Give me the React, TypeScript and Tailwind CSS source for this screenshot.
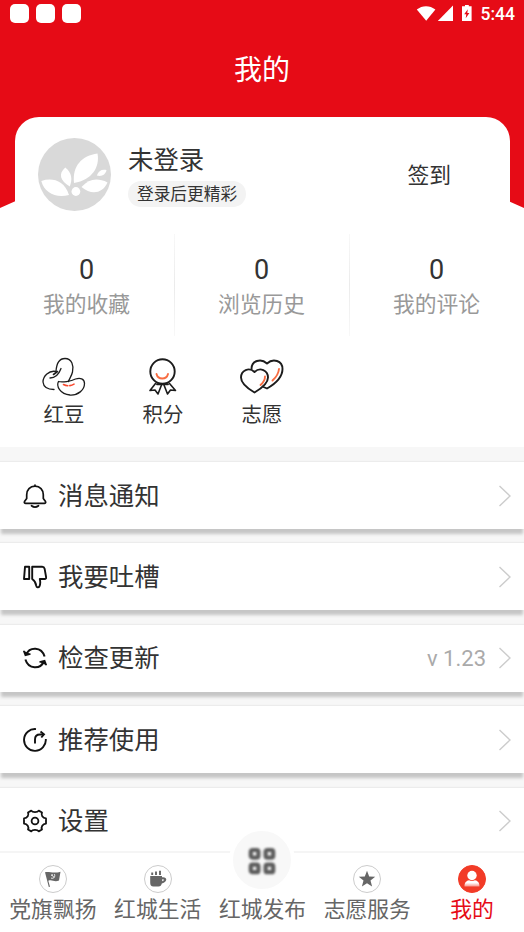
import React, { useState } from "react";

const PROFILE_STATS = [
  { id: "favorites", label: "我的收藏", count: 0 },
  { id: "history", label: "浏览历史", count: 0 },
  { id: "comments", label: "我的评论", count: 0 },
];

const SHORTCUTS = [
  { id: "bean", label: "红豆", icon: BeanIcon },
  { id: "points", label: "积分", icon: MedalIcon },
  { id: "volunteer", label: "志愿", icon: HeartsIcon },
];

const MENU_ITEMS = [
  { id: "notice", label: "消息通知", icon: BellIcon },
  { id: "feedback", label: "我要吐槽", icon: ThumbDownIcon },
  { id: "update", label: "检查更新", icon: RefreshIcon, value: "v 1.23" },
  { id: "share", label: "推荐使用", icon: ShareIcon },
  { id: "settings", label: "设置", icon: GearIcon },
];

const TABS = [
  { id: "party", label: "党旗飘扬", icon: FlagIcon },
  { id: "life", label: "红城生活", icon: CupIcon },
  { id: "publish", label: "红城发布", icon: GridIcon },
  { id: "service", label: "志愿服务", icon: StarIcon },
  { id: "mine", label: "我的", icon: UserIcon },
];

/* 状态栏 */
function StatusBar() {
  return (
    <div className="flex h-[27px] items-center justify-between pl-[10px] pr-[9px]">
      <div className="flex gap-[7px]">
        {[0, 1, 2].map((i) => (
          <span key={i} className="h-[19px] w-[19px] rounded-[5px] bg-white" />
        ))}
      </div>
      <div className="flex items-center">
        <svg width="56" height="18" viewBox="0 0 56 18" fill="#fff">
          <path d="M0.800 4.500C6.200 0 13.800 0 19.400 4.500L10.200 15.800Z" />
          <path d="M37 .6V16.100H21.800Z" />
          <path d="M49 0h3.800v1.200h2.800V16.100h-9.600V1.200h3Z" />
          <path d="M51.800 4.200l-3.600 5h2.100l-.6 4 3.700-5.200h-2.100Z" fill="#e60b16" />
        </svg>
        <span className="ml-[9px] pt-[2px] font-[Roboto] text-[17.500px] font-medium leading-none text-white">5:44</span>
      </div>
    </div>
  );
}

function ProfileHeader() {
  return (
    <header className="relative">
      <div className="absolute inset-x-0 top-0 h-[232px] bg-[#e60b16] [clip-path:polygon(0_0,100%_0,100%_208px,97%_201px,3%_201px,0_208px)]" />
      <div className="relative">
        <StatusBar />
        <h1 className="flex h-[89.500px] items-center justify-center pb-[2px] text-[28px] text-white">我的</h1>
        <div className="mx-[14.500px] flex h-[115px] items-start rounded-t-[24px] bg-white pl-[23px] pr-[58.500px] pt-[21.500px]">
          <AvatarPlaceholder />
          <div className="ml-[17.500px] flex-1">
            <p className="h-[42.500px] text-[25.400px] leading-[44px] text-[#333]">未登录</p>
            <p className="inline-flex h-[26px] items-center rounded-full bg-[#f3f3f3] px-[9px] pt-[3px] text-[16.700px] leading-none text-[#333]">
              登录后更精彩
            </p>
          </div>
          <button type="button" className="h-[73px] pt-[3px] text-[21.800px] text-[#333]">
            签到
          </button>
        </div>
      </div>
    </header>
  );
}

function AvatarPlaceholder() {
  return (
    <svg className="h-[73px] w-[73px] shrink-0" viewBox="0 0 73 73">
      <circle cx="36.5" cy="36.5" r="36.5" fill="#d9d9d9" />
      <g fill="#fff">
        <path d="M36 45C34 28 44 17.500 59.500 15.500C62 29 54 42 36 45Z" />
        <path d="M31.800 48.500C22 42.500 20 36 27.300 29.500C34 35 34.500 41 31.800 48.500Z" />
        <path d="M3.300 43C14 39.500 26 42 31 57C18 60.500 6.500 55 3.300 43Z" />
        <path d="M43.500 49C51 41 59 39.500 69.500 44.500C64.500 55.500 53.500 57.500 43.500 49Z" />
        <path d="M58.800 37.500C60.500 32.500 64 31 68.500 32C67.500 37 63.500 38.800 58.800 37.500Z" />
        <circle cx="37.900" cy="53.500" r="4.400" />
      </g>
    </svg>
  );
}

function BeanIcon() {
  return (
    <svg width="44" height="40" viewBox="0 0 44 40" fill="none" stroke="#1c1c1c" strokeWidth="1.300" strokeLinecap="round">
      <path d="M14 14.500C14.500 6 18 1.500 23 1.500C30 1.500 32 9 30.500 15C29.500 19.500 27 22 26.500 24.500" />
      <path d="M16.500 24.500C14 29 18 37 28 38C36 38.500 42.500 33 42.500 26.500C42.500 21.500 38 20.500 33.500 22C29 24.500 20 25.500 16.500 24.500Z" />
      <path d="M14 14.500C7 13 1 19 1 25C1.500 30 6 32.500 12 32.500" />
      <path d="M8 21C13 21 17 17 19 11.500" />
      <path d="M11.500 17.500L15.500 14.500" strokeWidth="1.600" />
      <path d="M21.500 27.500C25.500 29.500 30 29 33.500 26" stroke="#f8492f" strokeWidth="1.600" strokeDasharray="4.500 2" />
    </svg>
  );
}

function MedalIcon() {
  return (
    <svg width="44" height="40" viewBox="0 0 44 40" fill="none" stroke="#1c1c1c" strokeWidth="1.900" strokeLinejoin="round" strokeLinecap="round">
      <circle cx="21.500" cy="14.500" r="12.200" />
      <path d="M14.500 26.500L9 33.500L14 33L17 37L20.500 28M28.500 26.500L34.500 33.500L29.500 33L26.500 37L23 28" strokeWidth="1.600" />
      <path d="M16 27.200H27" />
      <path d="M15.500 17C17 23 25.500 23 27 17" stroke="#f86d42" strokeWidth="1.900" />
    </svg>
  );
}

function HeartsIcon() {
  return (
    <svg width="44" height="40" viewBox="0 0 44 40" fill="none" stroke="#1c1c1c" strokeWidth="1.900" strokeLinejoin="round" strokeLinecap="round">
      <path d="M11.500 12C11.500 3.500 21 1 27 6.500C33 1 42.500 3.500 42.500 12C42.500 21.500 34 27.500 27 31.500L23.500 30" />
      <path d="M14.500 15C20 9.500 28 13.500 28 20.500C28 27 20.500 32 14.500 35.500C8.500 32 1 27 1 20.500C1 13.500 9 9.500 14.500 15Z" fill="#fff" />
      <path d="M25 19.500C25 23 23.500 25.500 20.500 28M39 12C38.500 16.500 36.500 20 32.500 23.500" stroke="#f86d42" strokeWidth="1.900" />
    </svg>
  );
}

function BellIcon() {
  return (
    <svg width="24" height="24" viewBox="0 0 24 24" fill="none" stroke="#111" strokeWidth="1.700" strokeLinejoin="round" strokeLinecap="round">
      <path d="M12 1V2.200M12 2.200C7 2.200 3.700 6 3.700 10.800V14.500L1.500 17.500C1 18.600 1.500 19.300 2.700 19.300H21.300C22.500 19.300 23 18.600 22.500 17.500L20.300 14.500V10.800C20.300 6 17 2.200 12 2.200Z" />
      <path d="M8.500 21.700C10.500 23.200 13.500 23.200 15.500 21.700" />
    </svg>
  );
}

function ThumbDownIcon() {
  return (
    <svg width="24" height="24" viewBox="0 0 24 24" fill="none" stroke="#111" strokeWidth="1.900" strokeLinejoin="round">
      <path d="M2 1.800H6.200V14H1Z" />
      <path d="M9.200 1.800H19.200C20.600 1.800 21.300 2.500 21.600 3.700L23.100 12C23.300 13.200 22.800 14 21.600 14H16.800C17.500 17 17.300 19.500 16.500 21.200C15.500 23 13.500 22.600 13.200 20.700C12.900 17.500 11 15.200 9.200 14Z" />
    </svg>
  );
}

function RefreshIcon() {
  return (
    <svg width="24" height="24" viewBox="0 0 24 24" fill="none" stroke="#111" strokeWidth="2">
      <path d="M3.200 8.500C6.500.500 18.500.300 21.600 10.500M20.800 15.500C17.500 23.500 5.500 23.700 2.400 13.500" />
      <path d="M.700 4.800L2.400 9.200L7.500 8M23.300 19.200L21.600 14.800L16.500 16" fill="#111" strokeWidth="1.600" />
    </svg>
  );
}

function ShareIcon() {
  return (
    <svg width="24" height="24" viewBox="0 0 24 24" fill="none" stroke="#111" strokeWidth="1.900">
      <path d="M13 1.100A10.900 10.900 0 1 0 22.800 11" />
      <path d="M12 15.500V11.500C12 8.500 14 6.500 17 6.500H20" />
      <path d="M17.500 3.500L21 6.300L18.300 9.500" />
    </svg>
  );
}

function GearIcon() {
  return (
    <svg width="24" height="24" viewBox="0 0 24 24" fill="none" stroke="#111" strokeWidth="1.800" strokeLinejoin="round">
      <path d="M8.300 1.600C9.500 3.700 14.500 3.700 15.700 1.600L19 3.500C17.800 6 19.500 9.200 23 9.400V14.600C19.500 14.800 17.800 18 19 20.500L15.700 22.400C14.500 20.300 9.500 20.300 8.300 22.400L5 20.500C6.200 18 4.500 14.800 1 14.600V9.400C4.500 9.200 6.200 6 5 3.500Z" />
      <circle cx="12" cy="12" r="3.400" />
    </svg>
  );
}

function FlagIcon() {
  return (
    <svg width="18" height="18" viewBox="0 0 18 18">
      <path d="M1 2.300C5 .800 8 4 16.500 1.800L15 10.500C10 12.500 8 9 4.300 10.800L6 16.800L4.800 17Z" fill="#666" />
      <path d="M7.500 4.500L10 7.500M7 8C9 9 11.500 7.500 10.500 4.200M7.300 5.800L8.800 4.300" stroke="#fff" strokeWidth=".9" fill="none" />
    </svg>
  );
}

function CupIcon() {
  return (
    <svg width="18" height="18" viewBox="0 0 18 18" fill="#666">
      <path d="M1.200 6H13V7.300C18.500 6.500 19 12 12.800 13.500C12.300 15.500 11.500 16.500 9.500 16.500H4.500C2 16.500 1.200 15 1.200 12.500ZM13.200 9.200V11.300C15.500 10.500 15.500 8.800 13.200 9.200Z" fillRule="evenodd" />
      <path d="M3.200 5V2.500M7 5V1.500M11 5V.800" stroke="#666" strokeWidth="1.900" />
    </svg>
  );
}

function StarIcon() {
  return (
    <svg width="18" height="18" viewBox="0 0 18 18" fill="#666">
      <path d="M9 .800L11.200 6.500L17.200 6.800L12.500 10.600L14.100 16.500L9 13.200L3.900 16.500L5.500 10.600L.800 6.800L6.800 6.500Z" />
    </svg>
  );
}

function UserIcon() {
  return (
    <svg width="18" height="18" viewBox="0 0 18 18">
      <defs>
        <linearGradient id="userBody" x1="0" y1="0" x2="0" y2="1">
          <stop offset=".4" stopColor="#fff" />
          <stop offset="1" stopColor="#fff" stopOpacity=".45" />
        </linearGradient>
      </defs>
      <circle cx="9" cy="5.500" r="4.700" fill="#fff" />
      <path d="M1.500 16.500C1.500 12.500 3.500 10.800 6 10.300C8 11.300 10 11.300 12 10.300C14.500 10.800 16.500 12.500 16.500 16.500Z" fill="url(#userBody)" />
    </svg>
  );
}

function GridIcon() {
  return (
    <svg className="blur-[0.8px]" width="28" height="28" viewBox="0 0 28 28" fill="none" stroke="#5c5c5c" strokeWidth="4.200">
      <rect x="2.800" y="3" width="7.600" height="7.600" rx="1.800" />
      <rect x="17.600" y="3" width="7.600" height="7.600" rx="1.800" />
      <rect x="2.800" y="17.600" width="7.600" height="7.600" rx="1.800" />
      <rect x="17.600" y="17.600" width="7.600" height="7.600" rx="1.800" />
    </svg>
  );
}

export default function App() {
  const [activeTab, setActiveTab] = useState("mine");

  return (
    <div className="flex h-[932px] w-[524px] flex-col overflow-hidden bg-[#f7f7f7] font-[Roboto,'Noto_Sans_CJK_SC',sans-serif]">
      <div className="shrink-0 bg-white">
        <ProfileHeader />

        {/* 收藏 / 历史 / 评论 */}
        <div className="-ml-[1px] flex h-[106px]">
          {PROFILE_STATS.map((stat, index) => (
            <div key={stat.id} className="relative flex flex-1 flex-col items-center pt-[20px]">
              <span className="h-[35px] text-[27px] leading-[36px] text-[#333]">{stat.count}</span>
              <span className="h-[36px] text-[21.800px] leading-[35px] text-[#999]">{stat.label}</span>
              {index < PROFILE_STATS.length - 1 && (
                <i className="absolute -right-px top-[2px] h-[102px] w-px bg-linear-to-b from-[#f8f8f8] via-[#ebebeb] to-[#f8f8f8]" />
              )}
            </div>
          ))}
        </div>

        {/* 快捷入口 */}
        <div className="flex h-[109.500px] pl-[14.500px] pt-[19px]">
          {SHORTCUTS.map(({ id, label, icon: Icon }) => (
            <button key={id} type="button" className="flex w-[99px] flex-col items-center">
              <Icon />
              <span className="mt-[1.500px] text-[20.400px] leading-[35px] text-[#333]">{label}</span>
            </button>
          ))}
        </div>
      </div>

      {/* 功能列表 */}
      <ul className="flex min-h-0 flex-1 flex-col gap-[14.400px] overflow-hidden pt-[15px]">
        {MENU_ITEMS.map(({ id, label, icon: Icon, value }) => (
          <li
            key={id}
            className="flex h-[67px] shrink-0 items-center bg-white pl-[23px] pr-[12px] shadow-[0_6px_3px_-1px_#c6c6c6,0_-1px_1px_#ececec]"
          >
            <Icon />
            <span className="ml-[11px] flex-1 pt-[1.500px] text-[25.400px] leading-none text-[#333]">{label}</span>
            {value && <span className="mr-[12px] pt-[1px] text-[22px] text-[#aaa]">{value}</span>}
            <svg width="14" height="22" viewBox="0 0 14 22" fill="none" stroke="#ccc" strokeWidth="1.400">
              <path d="M1.500 1L12 11L1.500 21" />
            </svg>
          </li>
        ))}
      </ul>

      {/* 底部导航 */}
      <nav className="relative flex h-[81px] shrink-0 border-t-2 border-[#f5f5f5] bg-white">
        {TABS.map(({ id, label, icon: Icon }) => {
          const active = activeTab === id;
          const center = id === "publish";
          return (
            <button
              key={id}
              type="button"
              onClick={() => setActiveTab(id)}
              className={`flex flex-1 flex-col items-center whitespace-nowrap ${active ? "text-[#e60b16]" : "text-[#666]"}`}
            >
              {center ? (
                <span className="-mt-[26px] flex h-[66px] w-[66px] items-center justify-center rounded-full border-4 border-white bg-[#f8f8f8] pt-[1px]">
                  <Icon />
                </span>
              ) : (
                <span
                  className={`ml-[1px] mt-[12px] flex h-[28px] w-[28px] items-center justify-center rounded-full border ${
                    active ? "border-[#f23b27] bg-[#f23b27]" : "border-[#ccc] bg-white"
                  }`}
                >
                  <Icon />
                </span>
              )}
              <span className="pl-[1px] text-[21.800px] leading-[34px]">{label}</span>
            </button>
          );
        })}
      </nav>
    </div>
  );
}
